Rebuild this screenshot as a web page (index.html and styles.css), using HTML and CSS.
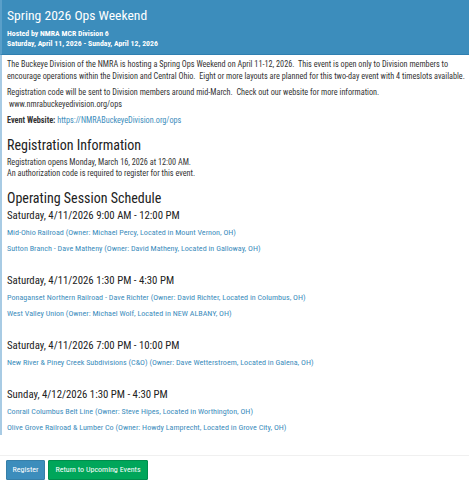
FILE: index.html
```html
<!DOCTYPE html>
<html>
<head>
<meta charset="utf-8">
<link rel="stylesheet" href="styles.css">
</head>
<body>
<div class="panel">
  <div class="panel-heading">
    <div class="title">Spring 2026 Ops Weekend</div>
    <div class="sub">Hosted by NMRA MCR Division 6</div>
    <div class="sub">Saturday, April 11, 2026 - Sunday, April 12, 2026</div>
  </div>
  <div class="panel-body">
    <p class="nowrap">The Buckeye Division of the NMRA is hosting a Spring Ops Weekend on April 11-12, 2026.&nbsp; This event is open only to Division members to<br>encourage operations within the Division and Central Ohio.&nbsp; Eight or more layouts are planned for this two-day event with 4 timeslots available.</p>
    <p class="nowrap">Registration code will be sent to Division members around mid-March.&nbsp; Check out our website for more information.<br>&nbsp;www.nmrabuckeyedivision.org/ops</p>
    <p><b>Event Website:</b> <a href="#">https://NMRABuckeyeDivision.org/ops</a></p>
    <h3 class="h-reg">Registration Information</h3>
    <p>Registration opens Monday, March 16, 2026 at 12:00 AM.<br>An authorization code is required to register for this event.</p>
    <h3 class="h-sched">Operating Session Schedule</h3>
    <div class="session">
      <h4>Saturday, 4/11/2026 9:00 AM - 12:00 PM</h4>
      <a class="layout" href="#">Mid-Ohio Railroad (Owner: Michael Percy, Located in Mount Vernon, OH)</a>
      <a class="layout" href="#">Sutton Branch - Dave Matheny (Owner: David Matheny, Located in Galloway, OH)</a>
    </div>
    <div class="session">
      <h4>Saturday, 4/11/2026 1:30 PM - 4:30 PM</h4>
      <a class="layout" href="#">Ponaganset Northern Railroad - Dave Richter (Owner: David Richter, Located in Columbus, OH)</a>
      <a class="layout" href="#">West Valley Union (Owner: Michael Wolf, Located in NEW ALBANY, OH)</a>
    </div>
    <div class="session">
      <h4>Saturday, 4/11/2026 7:00 PM - 10:00 PM</h4>
      <a class="layout" href="#">New River &amp; Piney Creek Subdivisions (C&amp;O) (Owner: Dave Wetterstroem, Located in Galena, OH)</a>
    </div>
    <div class="session">
      <h4>Sunday, 4/12/2026 1:30 PM - 4:30 PM</h4>
      <a class="layout" href="#">Conrail Columbus Belt Line (Owner: Steve Hipes, Located in Worthington, OH)</a>
      <a class="layout" href="#">Olive Grove Railroad &amp; Lumber Co (Owner: Howdy Lamprecht, Located in Grove City, OH)</a>
    </div>
  </div>
  <div class="panel-footer">
    <button class="btn btn-primary">Register</button>
    <button class="btn btn-success">Return to Upcoming Events</button>
  </div>
</div>
</body>
</html>
```
FILE: styles.css
```css
html, body {
  margin: 0;
  padding: 0;
  background: #fff;
}
body {
  font-family: "Roboto Condensed", Roboto, sans-serif;
  font-size: 8.2px;
  color: #333;
}
.panel {
  width: 469px;
}
.panel-heading {
  background: #3c8dbc;
  color: #fff;
  padding: 6px 5px 5px;
  border-bottom: 1px solid #2f7fb0;
  border-left: 2px solid #5a9fc9;
}
.title {
  font-size: 13.6px;
  line-height: 18px;
}
.sub {
  font-size: 7.8px;
  font-weight: bold;
  line-height: 10px;
}
.title + .sub {
  margin-top: 5px;
}
.panel-body {
  border-left: 2px solid #a8cbe4;
  padding: 4px 5px 0;
}
p {
  margin: 0 0 5px;
  line-height: 11.5px;
}
.nowrap {
  white-space: nowrap;
}
a {
  color: #3c8dbc;
  text-decoration: none;
}
h3 {
  font-size: 14px;
  font-weight: normal;
  line-height: 16px;
  margin: 0 0 4px;
  color: #222;
}
.h-reg {
  margin-top: 10px;
}
.h-sched {
  margin-top: 10px;
  margin-bottom: 3.5px;
}
.session {
  display: flex;
  flex-direction: column;
  align-items: flex-start;
  margin-bottom: 18.5px;
}
.session:last-child {
  margin-bottom: 20px;
}
h4 {
  font-size: 10.8px;
  font-weight: normal;
  line-height: 13px;
  margin: 0 0 1.5px;
  color: #222;
}
.layout {
  line-height: 16px;
  font-size: 8.1px;
}
.panel-footer {
  border-top: 1px solid #f0f0f0;
  padding: 4px 6px;
  display: flex;
  gap: 3px;
}
.btn {
  font-family: "Roboto Condensed", Roboto, sans-serif;
  font-size: 8px;
  color: #fff;
  height: 20px;
  padding: 0 4px;
  border-radius: 1px;
  cursor: pointer;
}
.btn-primary {
  background: #3c8dbc;
  border: 1px solid #367fa9;
  width: 39px;
}
.btn-success {
  background: #00a65a;
  border: 1px solid #008d4c;
  width: 100px;
}
```
